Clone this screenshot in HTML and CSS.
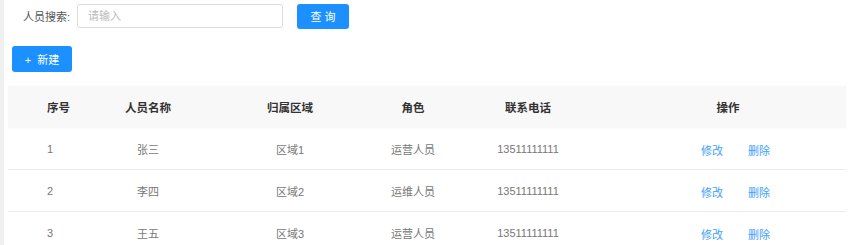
FILE: index.html
```html
<!DOCTYPE html>
<html lang="zh-CN">
<head>
    <meta charset="UTF-8">
    <meta name="viewport" content="width=device-width, initial-scale=1.0">
    <title>人员管理</title>
    <link rel="stylesheet" href="styles.css">
</head>
<body>
    <div class="page">
        <div class="search-bar">
            <label for="keyword">人员搜索:</label>
            <input type="text" id="keyword" placeholder="请输入">
            <button class="btn">查 询</button>
        </div>

        <div class="toolbar">
            <button class="btn btn-new">+&nbsp;&nbsp;新建</button>
        </div>

        <div class="table">
            <div class="row head">
                <div class="cell first">序号</div>
                <div class="cell">人员名称</div>
                <div class="cell">归属区域</div>
                <div class="cell">角色</div>
                <div class="cell">联系电话</div>
                <div class="cell">操作</div>
            </div>
            <div class="row">
                <div class="cell first">1</div>
                <div class="cell">张三</div>
                <div class="cell">区域1</div>
                <div class="cell">运营人员</div>
                <div class="cell">13511111111</div>
                <div class="cell actions"><a href="#">修改</a><a href="#">删除</a></div>
            </div>
            <div class="row">
                <div class="cell first">2</div>
                <div class="cell">李四</div>
                <div class="cell">区域2</div>
                <div class="cell">运维人员</div>
                <div class="cell">13511111111</div>
                <div class="cell actions"><a href="#">修改</a><a href="#">删除</a></div>
            </div>
            <div class="row">
                <div class="cell first">3</div>
                <div class="cell">王五</div>
                <div class="cell">区域3</div>
                <div class="cell">运营人员</div>
                <div class="cell">13511111111</div>
                <div class="cell actions"><a href="#">修改</a><a href="#">删除</a></div>
            </div>
        </div>
    </div>
</body>
</html>
```

FILE: styles.css
```css
body {
    margin: 0;
    padding: 0;
    background-color: #fff;
    font-family: "Liberation Sans", "Noto Sans CJK SC", sans-serif;
    font-size: 11px;
    color: #777;
    overflow: hidden;
}

.page {
    border-left: 4px solid #f0f0f0;
    padding: 3px 14px 0 4px;
    min-height: 245px;
    box-sizing: border-box;
}

.search-bar {
    display: flex;
    align-items: center;
    height: 26px;
    padding-left: 15px;
}

.search-bar label {
    color: #555;
    font-size: 11px;
    width: 54px;
}

.search-bar input {
    width: 206px;
    height: 24px;
    box-sizing: border-box;
    border: 1px solid #dcdcdc;
    border-radius: 3px;
    padding: 0 10px;
    font-family: inherit;
    font-size: 11px;
    outline: none;
}

.search-bar input::placeholder {
    color: #bbb;
}

.btn {
    background-color: #1d90ff;
    color: #fff;
    border: none;
    border-radius: 3px;
    height: 25px;
    width: 52px;
    font-family: inherit;
    font-size: 11px;
    cursor: pointer;
    margin-left: 14px;
}

.toolbar {
    margin-top: 17px;
    padding-left: 4px;
}

.btn-new {
    margin-left: 0;
    width: 60px;
    height: 26px;
}

.table {
    margin-top: 14px;
    width: 838px;
}

.row {
    display: grid;
    grid-template-columns: 88px 104px 180px 66px 164px 236px;
    height: 41px;
    align-items: center;
    border-bottom: 1px solid #ececec;
}

.row.head {
    background-color: #f8f8f8;
    height: 42px;
    border-bottom: none;
    border-radius: 2px;
    box-shadow: 0 0 1px rgba(0, 0, 0, 0.12);
    color: #333;
    font-weight: bold;
    font-size: 11.5px;
}

.cell {
    text-align: center;
    white-space: nowrap;
}

.cell.first {
    text-align: left;
    padding-left: 39px;
}

.actions {
    padding-top: 3px;
    padding-left: 15px;
}

.actions a {
    color: #409eff;
    text-decoration: none;
}

.actions a + a {
    margin-left: 25px;
}
```
